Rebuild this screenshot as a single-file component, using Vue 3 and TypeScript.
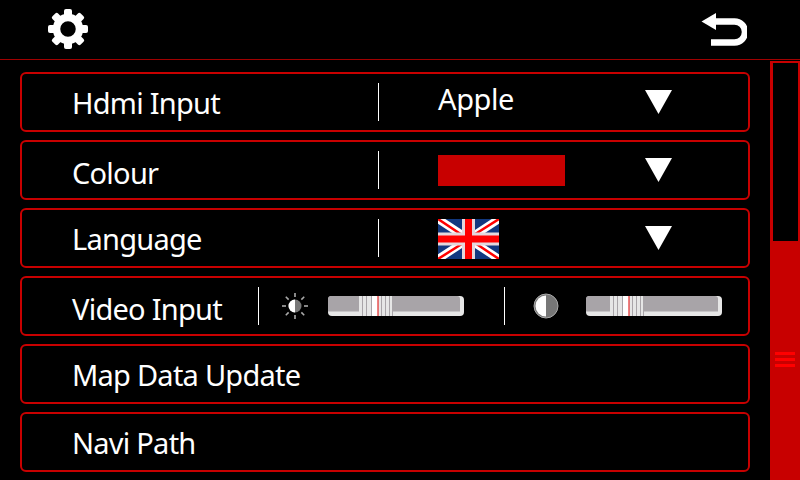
<script setup lang="ts">
const toothAngles: number[] = [0, 45, 90, 135, 180, 225, 270, 315]
const rayAngles: number[] = [0, 45, 90, 135, 180, 225, 270, 315]
const thumbLines: number[] = [3, 7, 12, 22, 26, 30, 33]
const sliders = [
  { id: 'b', thumb: 31 },
  { id: 'c', thumb: 24 }
]
</script>

<template>
  <div class="screen">
    <header class="top">
      <svg class="gear" width="40" height="40" viewBox="-20 -20 40 40">
        <rect v-for="a in toothAngles" :key="a" x="-4" y="-20" width="8" height="10" rx="2" fill="#fff" :transform="`rotate(${a})`" />
        <circle r="11.5" fill="none" stroke="#fff" stroke-width="7.5" />
      </svg>
      <svg class="back" width="46" height="36" viewBox="0 0 46 36">
        <path d="M0.5 9.5 L15 1 V18 Z" fill="#fff" />
        <path d="M13 9.5 H33.5 A10.5 10.5 0 0 1 33.5 30.5 H10" fill="none" stroke="#fff" stroke-width="6.5" />
      </svg>
    </header>
    <div class="main">
      <div class="list">
        <div class="row">
          <span class="label">Hdmi Input</span>
          <i class="sep" />
          <span class="value text">Apple</span>
          <svg class="drop" width="27" height="24" viewBox="0 0 27 24"><path d="M0 0 H27 L13.5 24 Z" fill="#fff" /></svg>
        </div>
        <div class="row">
          <span class="label low">Colour</span>
          <i class="sep" />
          <span class="value"><b class="swatch" /></span>
          <svg class="drop" width="27" height="24" viewBox="0 0 27 24"><path d="M0 0 H27 L13.5 24 Z" fill="#fff" /></svg>
        </div>
        <div class="row">
          <span class="label">Language</span>
          <i class="sep" />
          <span class="value">
            <svg class="flag" width="61" height="40" viewBox="0 0 61 40">
              <rect width="61" height="40" fill="#12387f" />
              <path d="M0 0 L61 40 M61 0 L0 40" stroke="#fff" stroke-width="8" />
              <path d="M0 0 L30 20 M61 40 L31 20 M61 0 L31 19 M0 40 L30 21" stroke="#f00" stroke-width="2.5" />
              <path d="M30.5 0 V40 M0 20 H61" stroke="#e4d8dc" stroke-width="13" />
              <path d="M30.5 0 V40 M0 20 H61" stroke="#f00" stroke-width="7" />
            </svg>
          </span>
          <svg class="drop" width="27" height="24" viewBox="0 0 27 24"><path d="M0 0 H27 L13.5 24 Z" fill="#fff" /></svg>
        </div>
        <div class="row video">
          <span class="label narrow low">Video Input</span>
          <i class="sep" />
          <svg class="sun" width="26" height="26" viewBox="-13 -13 26 26">
            <path v-for="a in rayAngles" :key="a" d="M0 -9 V-13" stroke="#aaa" stroke-width="1.6" :transform="`rotate(${a})`" />
            <circle r="6.5" fill="#777" />
            <path d="M0 -6.5 A6.5 6.5 0 0 0 0 6.5 Z" fill="#fff" />
          </svg>
          <svg v-for="(s, i) in sliders.slice(0, 1)" :key="i" class="slider" width="136" height="20" viewBox="0 0 136 20">
            <rect width="136" height="20" rx="4" fill="#e6e6e6" />
            <path d="M0 3 Q0 0 3 0 H129 Q132 0 132 3 V15.5 H0 Z" fill="#a8a4a8" />
            <g :transform="`translate(${s.thumb} 0)`">
              <rect width="34" height="20" fill="#e6e6e6" />
              <rect x="13" width="6" height="20" fill="#fff" />
              <rect v-for="x in thumbLines" :key="x" :x="x" width="1" height="20" fill="#a8a4a8" />
              <rect x="18.5" width="1" height="20" fill="#e00000" />
            </g>
          </svg>
          <i class="sep second" />
          <svg class="contrast" width="26" height="26" viewBox="-13 -13 26 26">
            <circle r="12" fill="#777" stroke="#aaa" stroke-width="1" />
            <path d="M0 -10.5 A10.5 10.5 0 0 0 0 10.5 Z" fill="#fff" />
          </svg>
          <svg v-for="(s, i) in sliders.slice(1)" :key="i" class="slider" width="136" height="20" viewBox="0 0 136 20">
            <rect width="136" height="20" rx="4" fill="#e6e6e6" />
            <path d="M0 3 Q0 0 3 0 H129 Q132 0 132 3 V15.5 H0 Z" fill="#a8a4a8" />
            <g :transform="`translate(${s.thumb} 0)`">
              <rect width="34" height="20" fill="#e6e6e6" />
              <rect x="13" width="6" height="20" fill="#fff" />
              <rect v-for="x in thumbLines" :key="x" :x="x" width="1" height="20" fill="#a8a4a8" />
              <rect x="18.5" width="1" height="20" fill="#e00000" />
            </g>
          </svg>
        </div>
        <div class="row"><span class="label">Map Data Update</span></div>
        <div class="row"><span class="label">Navi Path</span></div>
      </div>
      <aside class="scroll">
        <div class="track" />
        <div class="fill">
          <b class="grip" /><b class="grip" /><b class="grip" />
        </div>
      </aside>
    </div>
  </div>
</template>

<style scoped>
.screen {
  width: 800px;
  height: 480px;
  overflow: hidden;
  background: #000;
  color: #fff;
  font-family: "Noto Sans", "Open Sans", sans-serif;
  display: flex;
  flex-direction: column;
}
.top {
  height: 60px;
  flex: none;
  box-sizing: border-box;
  border-bottom: 1px solid #a00000;
  display: flex;
  justify-content: space-between;
  align-items: flex-start;
  padding: 9px 53px 0 48px;
}
.back {
  margin-top: 3px;
}
.main {
  flex: 1;
  display: flex;
  min-height: 0;
}
.list {
  width: 730px;
  margin: 12px 0 0 20px;
  display: flex;
  flex-direction: column;
  gap: 8px;
}
.row {
  height: 60px;
  flex: none;
  box-sizing: border-box;
  border: 2px solid #c80000;
  border-radius: 6px;
  display: flex;
  align-items: center;
  padding-left: 50px;
}
.label {
  font-size: 29px;
  letter-spacing: -0.75px;
  line-height: 38px;
  padding-top: 2px;
  width: 306px;
  flex: none;
  white-space: nowrap;
}
.label.narrow {
  width: 186px;
}
.label.low {
  padding-top: 6px;
}
.sep {
  width: 1px;
  height: 38px;
  background: #fff;
  flex: none;
}
.value {
  margin-left: 59px;
  width: 207px;
  flex: none;
  font-size: 29px;
  letter-spacing: -0.4px;
  line-height: 38px;
  display: flex;
  align-items: center;
}
.value.text {
  margin-bottom: 6px;
}
.swatch {
  width: 127px;
  height: 31px;
  background: #c80000;
}
.flag {
  display: block;
  margin-top: 2px;
}
.drop {
  flex: none;
}
.sun {
  margin-left: 23px;
  flex: none;
}
.slider {
  margin-left: 20px;
  flex: none;
}
.sep.second {
  margin-left: 40px;
}
.contrast {
  margin-left: 28px;
  flex: none;
}
.contrast + .slider {
  margin-left: 27px;
}
.scroll {
  width: 30px;
  margin: 1px 0 0 20px;
  display: flex;
  flex-direction: column;
  background: #c80000;
}
.track {
  height: 178px;
  margin: 2px 2px 0 3px;
  background: #000;
  flex: none;
}
.fill {
  flex: 1;
  padding-top: 111px;
  display: flex;
  flex-direction: column;
  align-items: center;
  gap: 3px;
}
.grip {
  width: 20px;
  height: 3px;
  background: #f00;
}
</style>

<style>
body {
  margin: 0;
  background: #000;
}
</style>
